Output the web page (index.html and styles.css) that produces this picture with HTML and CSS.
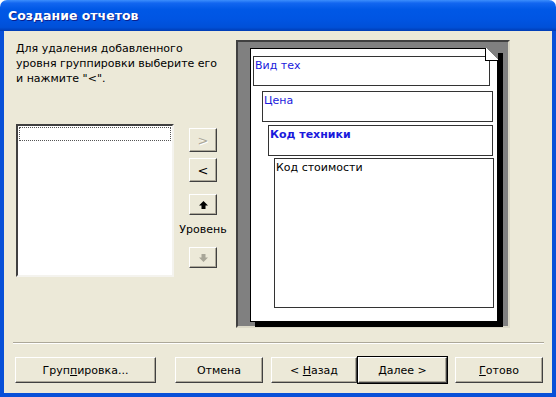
FILE: index.html
```html
<!DOCTYPE html>
<html lang="ru">
<head>
  <meta charset="UTF-8" />
  <title>Создание отчетов</title>
  <link rel="stylesheet" href="styles.css">
</head>
<body>
  <div class="window">
    <div class="titlebar">Создание отчетов</div>
    <div class="client">
      <div class="main">
        <div class="left">
          <p class="intro">Для удаления добавленного<br>уровня группировки выберите его<br>и нажмите "&lt;".</p>
          <div class="list-row">
            <div class="listbox"><div class="focus-row"></div></div>
            <div class="mover">
              <button class="btn small disabled">&gt;</button>
              <button class="btn small second">&lt;</button>
              <button class="btn arrow up">
                <svg width="9" height="8" viewBox="0 0 9 8"><path d="M4.5 0 L9 4.5 L6.5 4.5 L6.5 8 L2.5 8 L2.5 4.5 L0 4.5 Z" fill="#000"/></svg>
              </button>
              <span class="level">Уровень</span>
              <button class="btn arrow down disabled">
                <svg width="9" height="8" viewBox="0 0 9 8"><path d="M4.5 8 L9 3.5 L6.5 3.5 L6.5 0 L2.5 0 L2.5 3.5 L0 3.5 Z" fill="#a8a698"/></svg>
              </button>
            </div>
          </div>
        </div>
        <div class="preview">
          <div class="page">
            <div class="box b1 blue">Вид тех</div>
            <div class="box b2 blue">Цена</div>
            <div class="box b3 blue bold">Код техники</div>
            <div class="box b4">Код стоимости</div>
          </div>
        </div>
      </div>
      <div class="sep"></div>
      <div class="buttons">
        <button class="btn wide"><span>Груп<u>п</u>ировка...</span></button>
        <button class="btn cancel"><span>Отмена</span></button>
        <button class="btn back"><span>&lt; <u>Н</u>азад</span></button>
        <button class="btn next default"><span><u>Д</u>алее &gt;</span></button>
        <button class="btn finish"><span><u>Г</u>отово</span></button>
      </div>
    </div>
  </div>
</body>
</html>
```

FILE: styles.css
```css
* { box-sizing: border-box; margin: 0; padding: 0; }
body { background: #fff; font-family: "DejaVu Sans", Verdana, sans-serif; font-size: 11px; color: #000; }
.window { width: 556px; height: 397px; border-radius: 7px 7px 0 0; overflow: hidden; display: flex; flex-direction: column; }
.titlebar { height: 31px; padding: 8px 0 0 8px; color: #fff; font-weight: bold; font-size: 12.5px; text-shadow: 1px 1px 0 #0a1e8c;
  background: linear-gradient(to bottom, #3c8efc 0%, #1266f0 10%, #0058e6 30%, #0055e3 60%, #0050d8 88%, #003cb4 100%); }
.client { flex: 1; background: #ece9d8; border: 4px solid #0850d8; border-top: 0; display: flex; flex-direction: column; }
.main { display: flex; padding-top: 9px; height: 297px; }
.left { width: 232px; padding-left: 12px; }
.intro { line-height: 15px; margin-top: 1px; }
.list-row { display: flex; margin-top: 38px; }
.listbox { width: 158px; height: 153px; background: #fff; border: 2px solid; border-color: #404040 #f4f3ee #f4f3ee #404040; padding: 1px; }
.focus-row { height: 14px; border: 1px dotted #555; }
.mover { width: 52px; margin-left: 3px; display: flex; flex-direction: column; align-items: center; padding-top: 4px; }
.btn { font-family: inherit; font-size: 11px; color: #000; background: #ece9d8; border: 1px solid; border-color: #fff #404040 #404040 #fff; box-shadow: inset -1px -1px 0 #aca899; display: flex; align-items: center; justify-content: center; }
.btn span { white-space: pre; }
.btn u { text-decoration: underline; }
.small { width: 28px; height: 24px; font-size: 13px; }
.second { margin-top: 6px; }
.arrow { width: 28px; height: 21px; }
.up { margin-top: 12px; }
.level { margin-top: 8px; line-height: 14px; }
.down { margin-top: 10px; }
.disabled { color: #aca899; text-shadow: 1px 1px 0 #fff; }
.preview { width: 274px; height: 288px; background: #808080; border: 2px solid; border-color: #404040 #dcd9c8 #dcd9c8 #404040; padding: 6px 0 0 12px; }
.page { position: relative; width: 248px; height: 274px; background: #fff; border: 1px solid #000; box-shadow: 5px 5px 0 #000; display: flex; flex-direction: column; padding-top: 7px; }
.page::after { content: ""; position: absolute; top: -1px; right: -1px; width: 12px; height: 12px; background: linear-gradient(to bottom left, #808080 50%, #fff 50%); border-left: 1px solid #000; border-bottom: 1px solid #000; }
.box { border: 1px solid #333; padding: 1px 1px; line-height: 15px; }
.blue { color: #1a1adc; }
.bold { font-weight: bold; }
.b1 { height: 30px; margin: 0 7px 0 2px; }
.b2 { height: 31px; margin: 5px 4px 0 11px; }
.b3 { height: 31px; margin: 3px 4px 0 17px; }
.b4 { height: 150px; margin: 2px 3px 0 23px; }
.sep { height: 2px; margin: 14px 8px 0 9px; border-top: 1px solid #aca899; border-bottom: 1px solid #fff; }
.buttons { display: flex; margin-top: 13px; padding-left: 11px; height: 26px; }
.buttons .btn { height: 26px; }
.wide { width: 141px; }
.cancel { width: 88px; margin-left: 19px; }
.back { width: 86px; margin-left: 8px; }
.next { width: 89px; margin-left: 1px; }
.finish { width: 88px; margin-left: 8px; }
.default { outline: 1px solid #000; outline-offset: 0; border-color: #fff #404040 #404040 #fff; }
```
